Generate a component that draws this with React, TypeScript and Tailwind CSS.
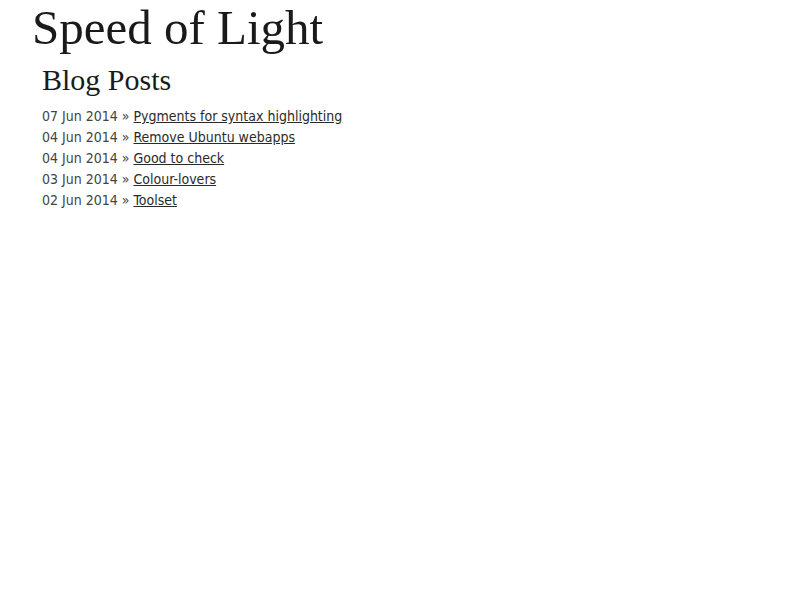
import React from "react";

const posts = [
  ["07 Jun 2014", "Pygments for syntax highlighting"],
  ["04 Jun 2014", "Remove Ubuntu webapps"],
  ["04 Jun 2014", "Good to check"],
  ["03 Jun 2014", "Colour-lovers"],
  ["02 Jun 2014", "Toolset"],
];

export default function App() {
  return (
    <div className="min-h-[600px] bg-white">
      <div className="px-[32px]">
        <h1 className="text-[49px] leading-[55px] text-[#1a1a1a] font-['Liberation_Serif',serif]">
          Speed of Light
        </h1>
        <div className="px-[10px]">
          <h2 className="mt-[9px] text-[30px] leading-[32px] text-[#1a1a1a] font-['Liberation_Serif',serif]">
            Blog Posts
          </h2>
          <ul className="mt-[10px] font-['DejaVu_Sans',sans-serif] font-stretch-condensed text-[14px] leading-[21px] text-[#444]">
            {posts.map(([d, t]) => (
              <li key={t}>
                {d} » <a href="#" className="underline text-[#2a2a2a]">{t}</a>
              </li>
            ))}
          </ul>
        </div>
      </div>
    </div>
  );
}
